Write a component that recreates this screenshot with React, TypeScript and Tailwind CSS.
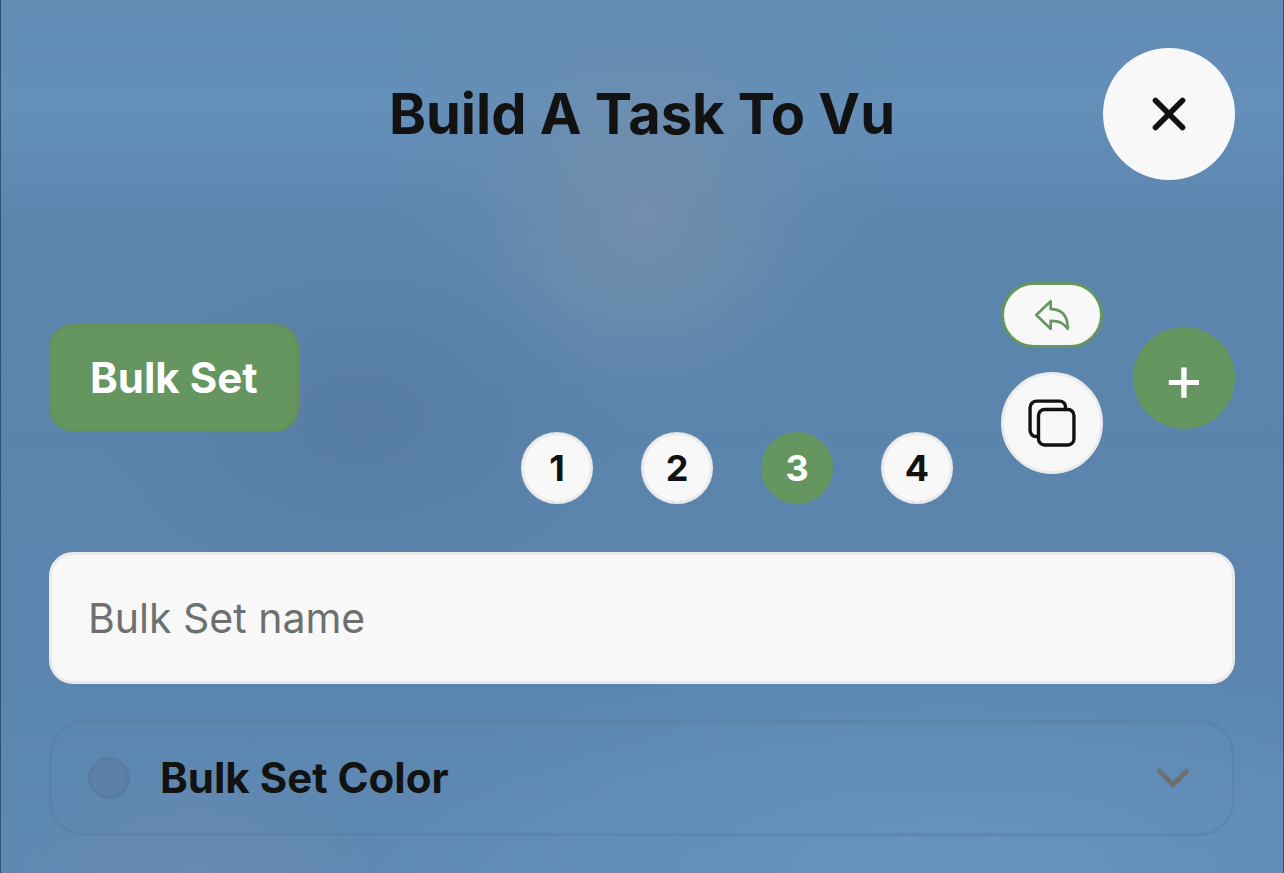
import { useState } from 'react';
import { ChevronDown, X } from 'lucide-react';
import { clsx } from 'clsx';

const steps = [1, 2, 3, 4];

export default function App() {
  const [activeStep, setActiveStep] = useState(3);
  const [name, setName] = useState('');

  return (
    <main className="relative isolate min-h-screen overflow-hidden border-x border-[#2f5273] bg-[#5b85ae] px-12 pt-12 pb-9 font-['Inter',sans-serif] text-[#121212]">
      <Backdrop />

      {/* Header */}
      <header className="grid grid-cols-[132px_1fr_132px] items-center">
        <h1 className="col-start-2 text-center text-[56px] leading-[72px] font-bold">Build A Task To Vu</h1>
        <button
          aria-label="Close"
          className="flex h-[132px] w-[132px] items-center justify-center rounded-full bg-[#f8f8f8]"
        >
          <X size={54} strokeWidth={2.5} />
        </button>
      </header>

      {/* Toolbar */}
      <div className="mt-[72px] flex min-h-[252px] items-center">
        <button className="h-[108px] rounded-3xl border-3 border-[#62915b] bg-[#669660] px-[38px] text-[42px] leading-[48px] font-bold text-white">
          Bulk Set
        </button>

        <div className="mr-12 ml-auto flex gap-12 self-end">
          {steps.map((step) => (
            <button
              key={step}
              onClick={() => setActiveStep(step)}
              className={clsx(
                'flex h-[72px] w-[72px] items-center justify-center rounded-full border-3 text-[36px] leading-[42px] font-bold',
                step === activeStep
                  ? 'border-[#669660] bg-[#669660] text-white'
                  : 'border-[#e9eae9] bg-[#f8f8f8]'
              )}
            >
              {step}
            </button>
          ))}
        </div>

        <div className="mr-[30px] flex flex-col gap-6">
          <button
            aria-label="Undo"
            className="flex h-[66px] w-[102px] items-center justify-center rounded-full border-3 border-[#669660] bg-[#f8f8f8] text-[#669660]"
          >
            <UndoIcon />
          </button>
          <button
            aria-label="Duplicate"
            className="flex h-[102px] w-[102px] items-center justify-center rounded-full border-3 border-[#e9eae9] bg-[#f8f8f8]"
          >
            <CopyIcon />
          </button>
        </div>

        <button
          aria-label="Add"
          className="flex h-[102px] w-[102px] items-center justify-center rounded-full bg-[#669660] text-[64px] leading-[60px] font-normal text-white"
        >
          +
        </button>
      </div>

      {/* Name */}
      <input
        type="text"
        aria-label="Bulk Set name"
        placeholder="Bulk Set name"
        value={name}
        onChange={(e) => setName(e.target.value)}
        className="mt-12 block h-[132px] w-full rounded-3xl border-3 border-[#e9eae9] bg-[#f8f8f8] px-9 text-[41px] leading-[48px] placeholder:text-[#6c7170] focus:outline-none"
      />

      {/* Color */}
      <button className="mt-9 flex h-[116px] w-full items-center rounded-[36px] border-3 border-[#55779b]/35 pr-8 pl-9 text-left">
        <span className="h-[42px] w-[42px] rounded-full border-3 border-[#55799d]/60 bg-[#5b7fa6]" />
        <span className="ml-[30px] text-[42px] leading-[48px] font-bold">Bulk Set Color</span>
        <ChevronDown size={54} strokeWidth={2.2} className="ml-auto text-[#6c7170]" />
      </button>
    </main>
  );
}

function Backdrop() {
  return (
    <div aria-hidden="true" className="absolute inset-0 -z-10">
      <div className="absolute inset-0 bg-[linear-gradient(180deg,#628cb4_0%,#648fb9_12%,#5d86af_25%,#5b84ad_50%,#5b86af_80%,#5f89b3_100%)]" />
      <div className="absolute inset-0 bg-[radial-gradient(ellipse_260px_280px_at_50%_15%,#6b8cad90_0%,#6b8cad00_100%)]" />
      <div className="absolute inset-0 bg-[radial-gradient(ellipse_180px_180px_at_50%_25%,#7690aac0_0%,#7690aa00_100%)]" />
      <div className="absolute inset-0 bg-[radial-gradient(ellipse_260px_190px_at_28%_48%,#577da2_0%,#577da200_100%)]" />
      <div className="absolute inset-0 bg-[radial-gradient(ellipse_600px_220px_at_74%_100%,#6793bf_0%,#6793bf00_100%)]" />
      <div className="absolute inset-0 bg-[radial-gradient(ellipse_180px_110px_at_15%_100%,#6888b0_0%,#6888b000_100%)]" />
    </div>
  );
}

function UndoIcon() {
  return (
    <svg width="42" height="42" viewBox="0 0 512 512" fill="none" stroke="currentColor" strokeWidth="32" strokeLinejoin="round">
      <path d="M240 424v-96c116.4 0 159.39 33.76 208 96 0-119.23-39.57-240-208-240V88L64 256z" />
    </svg>
  );
}

function CopyIcon() {
  return (
    <svg width="54" height="54" viewBox="0 0 512 512" fill="none" stroke="currentColor" strokeWidth="32" strokeLinejoin="round">
      <rect x="128" y="128" width="336" height="336" rx="57" ry="57" />
      <path strokeLinecap="round" d="M383.5 128l.5-24a56.16 56.16 0 00-56-56H112a64.19 64.19 0 00-64 64v216a56.16 56.16 0 0056 56h24" />
    </svg>
  );
}
